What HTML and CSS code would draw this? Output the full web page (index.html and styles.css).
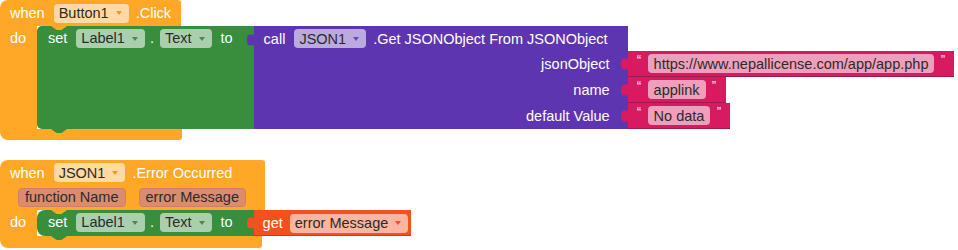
FILE: index.html
```html
<!DOCTYPE html>
<html lang="en">
<head>
    <meta charset="UTF-8">
    <meta name="viewport" content="width=device-width, initial-scale=1.0">
    <title>Blocks</title>
    <link rel="stylesheet" href="styles.css">
</head>

<body>
    <div class="workspace">

        <!-- when Button1.Click -->
        <div class="event">
            <div class="ev-row ev-head">
                <span>when</span>
                <span class="chip">Button1<i class="arr"></i></span>
                <span>.Click</span>
            </div>
            <div class="ev-body">
                <div class="arm"><span>do</span></div>
                <div class="set">
                    <div class="set-fields">
                        <span>set</span>
                        <span class="chip">Label1<i class="arr"></i></span>
                        <span class="dot">.</span>
                        <span class="chip">Text<i class="arr"></i></span>
                        <span class="to">to</span>
                    </div>
                    <div class="call">
                        <div class="call-head">
                            <svg class="tab" width="9" height="16" viewBox="0 0 9 16"><path d="M9 0 V1 C9 6 1 -2 1 8 S9 10 9 15 V16 Z"/></svg>
                            <span>call</span>
                            <span class="chip">JSON1<i class="arr"></i></span>
                            <span>.Get JSONObject From JSONObject</span>
                        </div>
                        <div class="arg-label">jsonObject</div>
                        <div class="str">
                            <svg class="tab" width="9" height="16" viewBox="0 0 9 16"><path d="M9 0 V1 C9 6 1 -2 1 8 S9 10 9 15 V16 Z"/></svg>
                            <span class="q">&ldquo;</span>
                            <span class="chip plain">https://www.nepallicense.com/app/app.php</span>
                            <span class="q">&rdquo;</span>
                        </div>
                        <div class="arg-label">name</div>
                        <div class="str">
                            <svg class="tab" width="9" height="16" viewBox="0 0 9 16"><path d="M9 0 V1 C9 6 1 -2 1 8 S9 10 9 15 V16 Z"/></svg>
                            <span class="q">&ldquo;</span>
                            <span class="chip plain">applink</span>
                            <span class="q">&rdquo;</span>
                        </div>
                        <div class="arg-label">default Value</div>
                        <div class="str">
                            <svg class="tab" width="9" height="16" viewBox="0 0 9 16"><path d="M9 0 V1 C9 6 1 -2 1 8 S9 10 9 15 V16 Z"/></svg>
                            <span class="q">&ldquo;</span>
                            <span class="chip plain">No data</span>
                            <span class="q">&rdquo;</span>
                        </div>
                    </div>
                </div>
            </div>
            <div class="ev-foot foot-1"></div>
        </div>

        <!-- when JSON1.ErrorOccurred -->
        <div class="event">
            <div class="ev-top">
                <div class="ev-row">
                    <span>when</span>
                    <span class="chip">JSON1<i class="arr"></i></span>
                    <span>.Error Occurred</span>
                </div>
                <div class="ev-params">
                    <span class="param">function Name</span>
                    <span class="param">error Message</span>
                </div>
            </div>
            <div class="ev-body">
                <div class="arm"><span>do</span></div>
                <div class="set">
                    <div class="set-fields round">
                        <span>set</span>
                        <span class="chip">Label1<i class="arr"></i></span>
                        <span class="dot">.</span>
                        <span class="chip">Text<i class="arr"></i></span>
                        <span class="to">to</span>
                    </div>
                    <div class="get">
                        <svg class="tab" width="9" height="16" viewBox="0 0 9 16"><path d="M9 0 V1 C9 6 1 -2 1 8 S9 10 9 15 V16 Z"/></svg>
                        <span>get</span>
                        <span class="chip">error Message<i class="arr"></i></span>
                    </div>
                </div>
            </div>
            <div class="ev-foot foot-2"></div>
        </div>

    </div>
</body>
</html>
```

FILE: styles.css
```css
* {
    margin: 0;
    padding: 0;
    box-sizing: border-box;
}

body {
    background: #fff;
    color: #fff;
    font-family: "Liberation Sans", Arial, sans-serif;
    font-size: 14.5px;
}

.workspace {
    display: flex;
    flex-direction: column;
    align-items: flex-start;
    gap: 20px;
}

/* event blocks */
.event {
    display: flex;
    flex-direction: column;
    align-items: flex-start;
}

.ev-head,
.ev-top {
    background: #ffa726;
    border-radius: 8px 3px 0 0;
}

.ev-row {
    display: flex;
    align-items: center;
    gap: 8px;
    height: 25px;
    padding: 0 10px;
}

.ev-head {
    height: 26px;
}

.ev-params {
    display: flex;
    align-items: center;
    gap: 13px;
    height: 25px;
    padding: 0 19px 0 18px;
}

.param {
    height: 19px;
    line-height: 17px;
    padding: 0 6px;
    border-radius: 4px;
    background: #db8c70;
    border: 1px solid #cf7f62;
    color: #2b2b2b;
}

.ev-body {
    display: flex;
    align-items: stretch;
}

.arm {
    width: 37px;
    background: #ffa726;
    padding-left: 10px;
    line-height: 25px;
}

.ev-foot {
    height: 11px;
    background: #ffa726;
    border-radius: 0 0 3px 8px;
}

.foot-1 { width: 182px; }
.foot-2 { width: 262px; height: 12px; }

/* dropdown chips */
.chip {
    display: inline-flex;
    align-items: center;
    gap: 7px;
    height: 19px;
    padding: 0 7px 0 5px;
    border-radius: 4px;
    background: rgba(255, 255, 255, 0.58);
    color: #2b2b2b;
    margin: 0 -1px 0 1px;
    white-space: nowrap;
}

.chip.plain {
    padding: 0 6px;
    margin: 0;
}

.arr {
    width: 0;
    height: 0;
    border-left: 3.5px solid transparent;
    border-right: 3.5px solid transparent;
    border-top: 4px solid var(--arr);
}

.ev-head .arr, .ev-row .arr { --arr: #f39a1c; }

/* set block */
.set {
    display: flex;
    align-items: stretch;
}

.set-fields {
    position: relative;
    display: flex;
    align-items: flex-start;
    gap: 8px;
    padding: 3px 21px 0 11px;
    background: #388e3c;
    border-radius: 5px 0 0 5px;
    --arr: #3f8f42;
}

.set-fields.round {
    border-radius: 8px 0 0 8px;
}

.set-fields > span {
    line-height: 19px;
}

.set-fields .dot {
    margin: 0 -3px 0 -2px;
}

.set-fields .to {
    margin-left: 2px;
}

.set-fields::before,
.set-fields::after {
    content: "";
    position: absolute;
    left: 14px;
    width: 16px;
    height: 4px;
    clip-path: polygon(0 0, 100% 0, 65% 100%, 35% 100%);
}

.set-fields::before {
    top: 0;
    background: #ffa726;
}

.set-fields::after {
    bottom: -4px;
    background: #388e3c;
}

/* puzzle tabs */
.tab {
    position: absolute;
    left: -8px;
    top: 5px;
}

/* call block */
.call {
    display: grid;
    grid-template-columns: auto auto;
    align-self: flex-start;
    --arr: #6b44bd;
}

.call-head {
    grid-column: 1;
    position: relative;
    display: flex;
    align-items: center;
    gap: 8px;
    height: 25px;
    padding: 0 20px 0 10px;
    background: #5e35b1;
}

.call-head .tab { fill: #5e35b1; top: 6px; }

.arg-label {
    grid-column: 1;
    height: 26px;
    line-height: 26px;
    text-align: right;
    padding-right: 18px;
    background: #5e35b1;
}

.arg-label:last-of-type {
    box-shadow: inset 0 -1px #4a2a8e;
}

/* text blocks */
.str {
    grid-column: 2;
    position: relative;
    justify-self: start;
    display: flex;
    align-items: center;
    height: 26px;
    padding: 0 9px 1px 9px;
    background: #d81b60;
    box-shadow: inset 0 -1px #a5164b;
}

.str .tab { fill: #d81b60; }

.q {
    align-self: flex-start;
    margin-top: 3px;
    font-size: 10px;
    font-weight: bold;
    color: #fbd3e1;
}

.str .q:first-of-type { margin-right: 6px; }
.str .q:last-of-type { margin-left: 6px; }

/* get block */
.get {
    position: relative;
    display: flex;
    align-items: center;
    gap: 6px;
    height: 26px;
    padding: 0 4px 0 9px;
    background: #f4511e;
    box-shadow: inset 0 -1px #c93f14;
    --arr: #f4511e;
}

.get .tab { fill: #f4511e; }
```
